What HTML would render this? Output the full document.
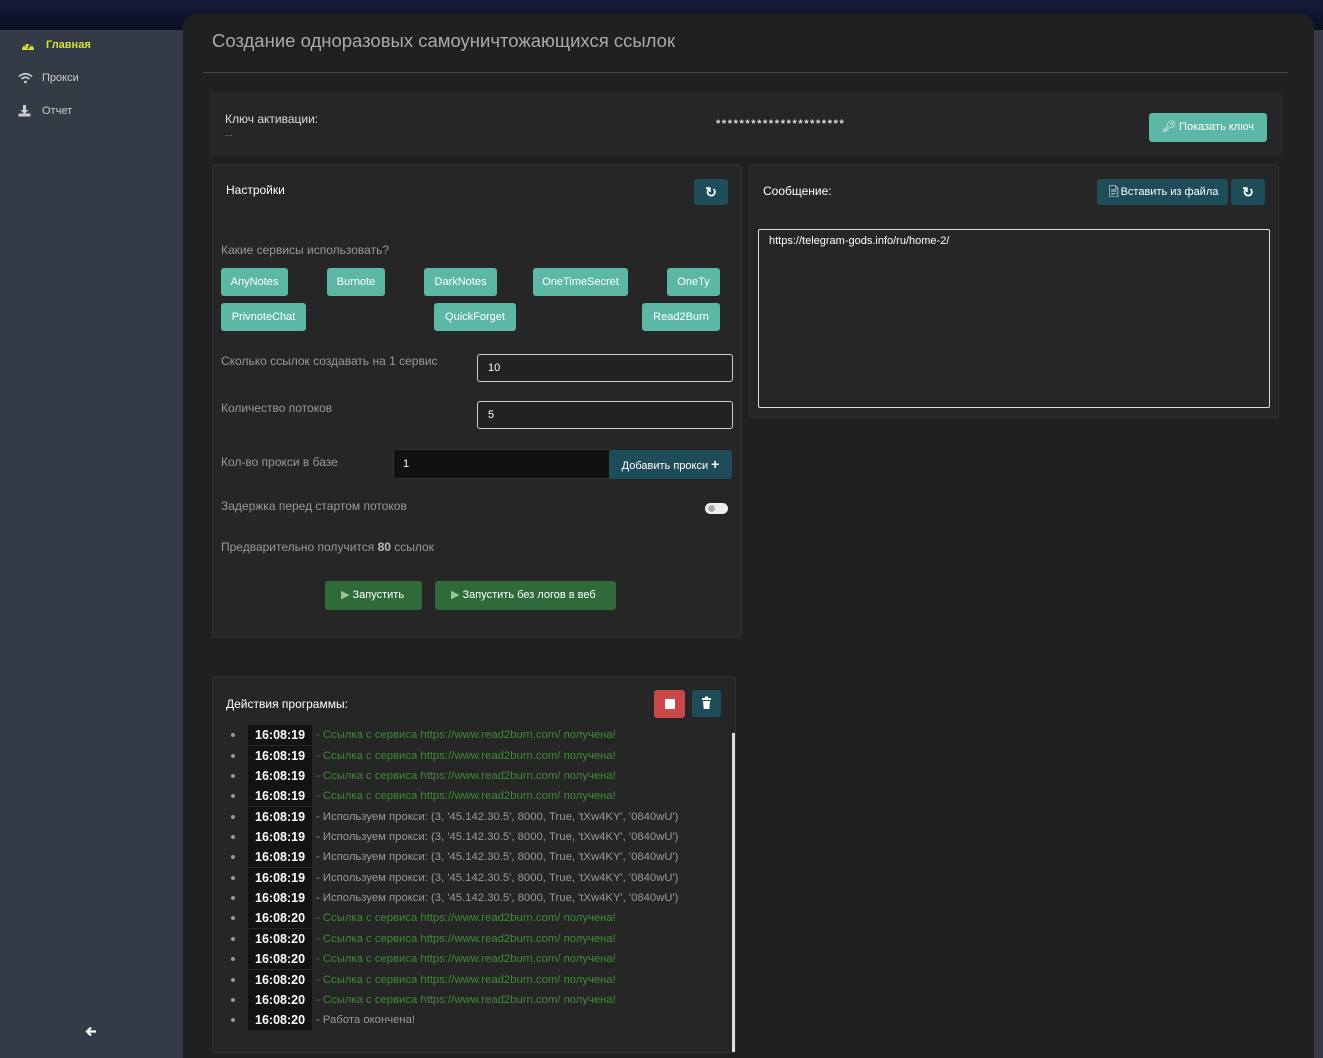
<!DOCTYPE html>
<html><head><meta charset="utf-8">
<style>
*{margin:0;padding:0;box-sizing:border-box}
body{width:1323px;height:1058px;overflow:hidden;background:#0f1428;font-family:"Liberation Sans",sans-serif;position:relative}
.a{position:absolute}
.top{left:0;top:0;width:1323px;height:30px;background:linear-gradient(#161b3a,#0b0f22)}
.side{left:0;top:30px;width:183px;height:1028px;background:#343a46}
.rside{left:1300px;top:30px;width:23px;height:1028px;background:#343a46}
.main{left:183px;top:14px;width:1131px;height:1044px;background:#202020;border-radius:14px 14px 0 0}
.card{background:#262626;border:1px solid #303030;border-radius:3px}
.t{color:#ddd;font-size:12px;white-space:nowrap}
.g{color:#999;font-size:12px;white-space:nowrap}
.btn{background:#5cb8a5;color:#fff;font-size:11px;border-radius:3px;text-align:center;white-space:nowrap}
.dk{background:#1e4c58;color:#fff;border-radius:3px;font-size:11px;text-align:center;white-space:nowrap}
.gr{background:#2f6b3a;color:#fff;border-radius:3px;font-size:11px;white-space:nowrap}
.in{border:1px solid #ccc;border-radius:3px;background:#222;color:#fff;font-size:11px;padding-left:10px}
.row{left:230px;height:20px;font-size:11px;white-space:nowrap;display:flex;align-items:center}
.row .b{width:4px;height:4px;border-radius:50%;background:#999;margin-right:13px;margin-left:1px}
.row .tm{background:#131313;color:#fff;font-weight:bold;font-size:12.5px;width:64px;height:20px;line-height:20px;padding-left:7px;margin-right:4px}
.row .gn{color:#3e8a35;font-size:11.3px}
.row .gy{color:#999;font-size:11.3px}
</style></head><body>
<div class="a top"></div>
<div class="a side"></div>
<div class="a rside"></div>
<div class="a main"></div>

<svg class="a" style="left:21px;top:39px" width="14" height="12" viewBox="0 0 14 12"><path d="M1 11 A6 6 0 1 1 13 11 Z" fill="#d6e23a"/><path d="M7 10 L9 5" stroke="#343a46" stroke-width="1.5"/><circle cx="4" cy="7" r="0.8" fill="#343a46"/><circle cx="7" cy="4" r="0.8" fill="#343a46"/><circle cx="10" cy="7" r="0.8" fill="#343a46"/></svg>
<div class="a" style="left:46px;top:39px;color:#d6e23a;font-size:11px;font-weight:bold">Главная</div>
<svg class="a" style="left:18px;top:72px" width="15" height="12" viewBox="0 0 15 12"><path d="M1 4.5 Q7.5 -1 14 4.5" stroke="#ccc" stroke-width="1.6" fill="none"/><path d="M3.5 7 Q7.5 3.5 11.5 7" stroke="#ccc" stroke-width="1.6" fill="none"/><circle cx="7.5" cy="10" r="1.4" fill="#ccc"/></svg>
<div class="a" style="left:42px;top:72px;color:#ccc;font-size:11px">Прокси</div>
<svg class="a" style="left:18px;top:104px" width="13" height="13" viewBox="0 0 13 13"><path d="M5 1h3v5h2.5l-4 4-4-4H5z" fill="#ccc"/><rect x="0.5" y="9.5" width="12" height="3" fill="#ccc"/></svg>
<div class="a" style="left:42px;top:105px;color:#ccc;font-size:11px">Отчет</div>
<svg class="a" style="left:85px;top:1026px" width="12" height="11" viewBox="0 0 12 11"><path d="M11 5.5H2M6 1.5L2 5.5 6 9.5" stroke="#fff" stroke-width="2.2" fill="none"/></svg>

<div class="a" style="left:212px;top:30px;color:#aaa;font-size:18.5px">Создание одноразовых самоуничтожающихся ссылок</div>
<div class="a" style="left:203px;top:72px;width:1085px;height:1px;background:#444"></div>

<div class="a" style="left:210px;top:92px;width:1073px;height:64px;background:#262626"></div>
<div class="a t" style="left:225px;top:112px">Ключ активации:</div>
<div class="a g" style="left:225px;top:128px;font-size:9px">...</div>
<div class="a" style="left:716px;top:118px;color:#ddd;font-size:11px;font-weight:bold;letter-spacing:1.6px">**********************</div>
<div class="a btn" style="left:1149px;top:113px;width:118px;height:29px;line-height:29px">&#x1F511;&#xFE0E; Показать ключ</div>

<div class="a card" style="left:212px;top:164px;width:530px;height:474px"></div>
<div class="a t" style="left:226px;top:183px;color:#fff">Настройки</div>
<div class="a dk" style="left:694px;top:179px;width:34px;height:26px;line-height:26px;font-weight:bold;font-size:14px">&#x21BB;</div>
<div class="a g" style="left:221px;top:243px">Какие сервисы использовать?</div>
<div class="a btn" style="left:221px;top:268px;width:67px;height:28px;line-height:28px">AnyNotes</div>
<div class="a btn" style="left:327px;top:268px;width:58px;height:28px;line-height:28px">Burnote</div>
<div class="a btn" style="left:424px;top:268px;width:73px;height:28px;line-height:28px">DarkNotes</div>
<div class="a btn" style="left:533px;top:268px;width:95px;height:28px;line-height:28px">OneTimeSecret</div>
<div class="a btn" style="left:667px;top:268px;width:53px;height:28px;line-height:28px">OneTy</div>
<div class="a btn" style="left:221px;top:303px;width:85px;height:28px;line-height:28px">PrivnoteChat</div>
<div class="a btn" style="left:434px;top:303px;width:82px;height:28px;line-height:28px">QuickForget</div>
<div class="a btn" style="left:642px;top:303px;width:78px;height:28px;line-height:28px">Read2Burn</div>
<div class="a g" style="left:221px;top:354px">Сколько ссылок создавать на 1 сервис</div>
<div class="a in" style="left:477px;top:354px;width:256px;height:28px;line-height:26px">10</div>
<div class="a g" style="left:221px;top:401px">Количество потоков</div>
<div class="a in" style="left:477px;top:401px;width:256px;height:28px;line-height:26px">5</div>
<div class="a g" style="left:221px;top:455px">Кол-во прокси в базе</div>
<div class="a" style="left:393px;top:449px;width:217px;height:30px;background:#111;border:1px solid #333;border-radius:3px 0 0 3px;color:#fff;font-size:11px;line-height:28px;padding-left:9px">1</div>
<div class="a dk" style="left:609px;top:450px;width:123px;height:29px;line-height:29px;font-size:11px">Добавить прокси <b style="font-size:14px">+</b></div>
<div class="a g" style="left:221px;top:499px">Задержка перед стартом потоков</div>
<div class="a" style="left:705px;top:503px;width:23px;height:11px;border-radius:6px;background:#eee"><div style="margin:2px 0 0 3px;width:7px;height:7px;border-radius:50%;background:#aaa"></div></div>
<div class="a g" style="left:221px;top:540px">Предварительно получится <b style="color:#bbb">80</b> ссылок</div>
<div class="a gr" style="left:325px;top:581px;width:97px;height:29px;line-height:29px;padding-left:16px"><span style="color:#9cc49c">&#9654;</span> Запустить</div>
<div class="a gr" style="left:435px;top:581px;width:181px;height:29px;line-height:29px;padding-left:16px"><span style="color:#9cc49c">&#9654;</span> Запустить без логов в веб</div>

<div class="a card" style="left:749px;top:164px;width:530px;height:254px"></div>
<div class="a t" style="left:763px;top:184px;color:#fff">Сообщение:</div>
<div class="a dk" style="left:1097px;top:179px;width:131px;height:26px;line-height:26px">&#x1F4C4;&#xFE0E;Вставить из файла</div>
<div class="a dk" style="left:1231px;top:179px;width:34px;height:26px;line-height:26px;font-weight:bold;font-size:14px">&#x21BB;</div>
<div class="a" style="left:758px;top:229px;width:512px;height:179px;border:1px solid #ddd;border-radius:2px;color:#fff;font-size:11px;padding:5px 0 0 10px">https://telegram-gods.info/ru/home-2/</div>

<div class="a card" style="left:212px;top:676px;width:524px;height:377px"></div>
<div class="a t" style="left:226px;top:697px;color:#fff">Действия программы:</div>
<div class="a" style="left:654px;top:690px;width:31px;height:28px;background:#c94848;border-radius:3px"><div style="margin:9px auto;width:10px;height:10px;background:#fff;border-radius:1px"></div></div>
<div class="a dk" style="left:692px;top:690px;width:29px;height:27px"><svg width="29" height="27" viewBox="0 0 29 27"><rect x="10" y="8" width="9" height="2" fill="#fff"/><rect x="13" y="6.5" width="3" height="2" fill="#fff"/><path d="M11 11h7l-0.7 8h-5.6z" fill="#fff"/></svg></div>
<div class="a" style="left:732px;top:733px;width:3px;height:319px;background:#ddd"></div>

<div class="a row" style="top:725px"><span class="b"></span><span class="tm">16:08:19</span><span class="gn">- Ссылка с сервиса https://www.read2burn.com/ получена!</span></div>
<div class="a row" style="top:746px"><span class="b"></span><span class="tm">16:08:19</span><span class="gn">- Ссылка с сервиса https://www.read2burn.com/ получена!</span></div>
<div class="a row" style="top:766px"><span class="b"></span><span class="tm">16:08:19</span><span class="gn">- Ссылка с сервиса https://www.read2burn.com/ получена!</span></div>
<div class="a row" style="top:786px"><span class="b"></span><span class="tm">16:08:19</span><span class="gn">- Ссылка с сервиса https://www.read2burn.com/ получена!</span></div>
<div class="a row" style="top:807px"><span class="b"></span><span class="tm">16:08:19</span><span class="gy">- Используем прокси: (3, '45.142.30.5', 8000, True, 'tXw4KY', '0840wU')</span></div>
<div class="a row" style="top:827px"><span class="b"></span><span class="tm">16:08:19</span><span class="gy">- Используем прокси: (3, '45.142.30.5', 8000, True, 'tXw4KY', '0840wU')</span></div>
<div class="a row" style="top:847px"><span class="b"></span><span class="tm">16:08:19</span><span class="gy">- Используем прокси: (3, '45.142.30.5', 8000, True, 'tXw4KY', '0840wU')</span></div>
<div class="a row" style="top:868px"><span class="b"></span><span class="tm">16:08:19</span><span class="gy">- Используем прокси: (3, '45.142.30.5', 8000, True, 'tXw4KY', '0840wU')</span></div>
<div class="a row" style="top:888px"><span class="b"></span><span class="tm">16:08:19</span><span class="gy">- Используем прокси: (3, '45.142.30.5', 8000, True, 'tXw4KY', '0840wU')</span></div>
<div class="a row" style="top:908px"><span class="b"></span><span class="tm">16:08:20</span><span class="gn">- Ссылка с сервиса https://www.read2burn.com/ получена!</span></div>
<div class="a row" style="top:929px"><span class="b"></span><span class="tm">16:08:20</span><span class="gn">- Ссылка с сервиса https://www.read2burn.com/ получена!</span></div>
<div class="a row" style="top:949px"><span class="b"></span><span class="tm">16:08:20</span><span class="gn">- Ссылка с сервиса https://www.read2burn.com/ получена!</span></div>
<div class="a row" style="top:970px"><span class="b"></span><span class="tm">16:08:20</span><span class="gn">- Ссылка с сервиса https://www.read2burn.com/ получена!</span></div>
<div class="a row" style="top:990px"><span class="b"></span><span class="tm">16:08:20</span><span class="gn">- Ссылка с сервиса https://www.read2burn.com/ получена!</span></div>
<div class="a row" style="top:1010px"><span class="b"></span><span class="tm">16:08:20</span><span class="gy">- Работа окончена!</span></div>
</body></html>
